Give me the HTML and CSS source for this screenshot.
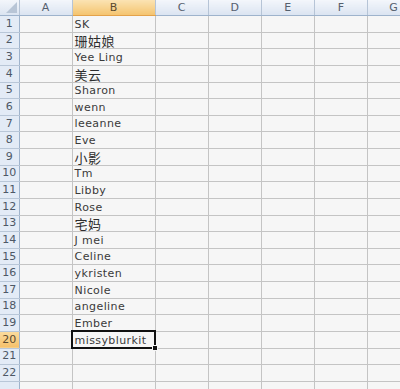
FILE: index.html
```html
<!DOCTYPE html>
<html lang="en">
<head>
    <meta charset="UTF-8">
    <title>Sheet1</title>
    <link rel="stylesheet" href="styles.css">
</head>
<body>
    <table class="sheet">
        <colgroup>
            <col class="c-head">
            <col class="c-a">
            <col class="c-b">
            <col class="c-n">
            <col class="c-n">
            <col class="c-n">
            <col class="c-n">
            <col class="c-g">
        </colgroup>
        <thead>
            <tr>
                <th class="corner"><span class="tri"></span></th>
                <th>A</th>
                <th class="active">B</th>
                <th>C</th>
                <th>D</th>
                <th>E</th>
                <th>F</th>
                <th>G</th>
            </tr>
        </thead>
        <tbody id="rows">
        </tbody>
    </table>

    <script>
        var names = ['SK', '珊姑娘', 'Yee Ling', '美云', 'Sharon', 'wenn', 'leeanne', 'Eve',
            '小影', 'Tm', 'Libby', 'Rose', '宅妈', 'J mei', 'Celine', 'ykristen', 'Nicole',
            'angeline', 'Ember', 'missyblurkit', '', '', ''];
        var body = document.getElementById('rows');
        names.forEach(function (name, i) {
            var row = body.insertRow();
            var head = document.createElement('th');
            head.className = 'rowhead' + (i === 19 ? ' active' : '');
            // last row only peeks in at the bottom edge, leave its number off
            if (i < 22) head.textContent = i + 1;
            row.appendChild(head);
            for (var c = 0; c < 7; c++) {
                var cell = row.insertCell();
                if (c === 1) {
                    cell.textContent = name;
                    if (/[\u4e00-\u9fff]/.test(name)) cell.className = 'cjk';
                    if (i === 19) cell.classList.add('selected');
                }
            }
        });
    </script>
</body>
</html>
```

FILE: styles.css
```css
body {
    margin: 0;
    background-color: #f6f6f6;
    font-family: Tahoma, "DejaVu Sans", "Liberation Sans", sans-serif;
    overflow: hidden;
}
.sheet {
    border-collapse: collapse;
    table-layout: fixed;
    width: 420px;
}
.c-head { width: 19px; }
.c-a { width: 53px; }
.c-b { width: 83px; }
.c-n { width: 53px; }
.c-g { width: 52px; }

thead th {
    height: 15px;
    padding: 0;
    font-weight: normal;
    font-size: 11px;
    color: #55606e;
    text-align: center;
    background: linear-gradient(#f3f6fb, #dbe4f1);
    border-right: 1px solid #b6c4d6;
    border-bottom: 1px solid #9eb3cc;
}
thead th.active {
    background: linear-gradient(#fbe3b3, #f4c46f);
    color: #5a4a30;
    border-bottom-color: #e3a24a;
}
.corner {
    position: relative;
}
.tri {
    position: absolute;
    right: 2px;
    bottom: 2px;
    width: 0;
    height: 0;
    border-left: 11px solid transparent;
    border-bottom: 11px solid #b8c5d6;
}

tbody tr {
    height: 16.63px;
}
.rowhead {
    padding: 0;
    font-weight: normal;
    font-size: 11px;
    line-height: 14px;
    color: #4d5866;
    text-align: center;
    background-color: #e3ebf6;
    border-right: 1px solid #9eb3cc;
    border-bottom: 1px solid #b9c7d8;
}
.rowhead.active {
    background: linear-gradient(#fbdc9f, #f5c06a);
    color: #5a4a30;
}
td {
    padding: 0 2px;
    font-size: 11px;
    letter-spacing: 0.4px;
    color: #3a3a3a;
    white-space: nowrap;
    overflow: hidden;
    border-right: 1px solid #c4c4c4;
    border-bottom: 1px solid #c4c4c4;
    vertical-align: bottom;
    line-height: 14px;
}
td.cjk {
    font-family: "Noto Sans CJK SC", sans-serif;
    font-size: 13px;
    letter-spacing: 0.5px;
    line-height: 15px;
    color: #2e2e2e;
    overflow: visible;
}
td.selected {
    position: relative;
    overflow: visible;
    outline: 2px solid #111;
    outline-offset: -1px;
}
td.selected::after {
    content: "";
    position: absolute;
    right: -3px;
    bottom: -3px;
    width: 4px;
    height: 4px;
    background-color: #111;
    border: 1px solid #f6f6f6;
}
```
